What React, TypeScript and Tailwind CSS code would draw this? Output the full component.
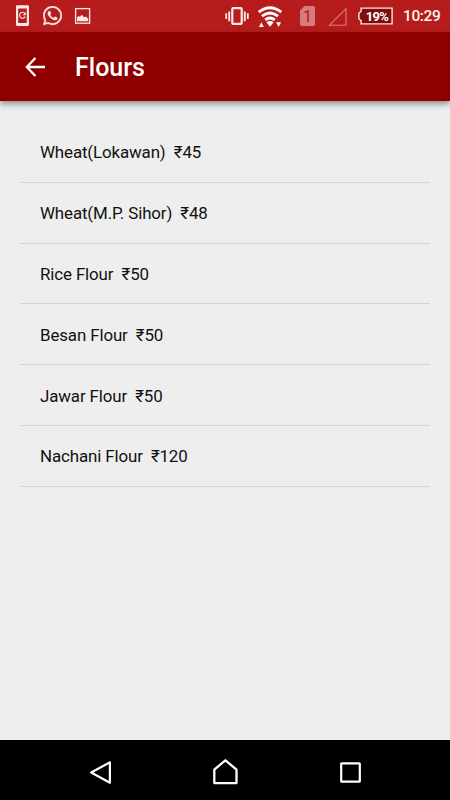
import React from "react";

const flours = [
  { name: "Wheat(Lokawan)", price: 45 },
  { name: "Wheat(M.P. Sihor)", price: 48 },
  { name: "Rice Flour", price: 50 },
  { name: "Besan Flour", price: 50 },
  { name: "Jawar Flour", price: 50 },
  { name: "Nachani Flour", price: 120 },
];

function PhoneSyncIcon() {
  return (
    <svg className="ml-[15px] h-8 w-[15px] shrink-0" viewBox="15 0 15 32" fill="none">
      <path fillRule="evenodd" fill="#f9e8e8" d="M17.3 5.3h10.4a1.3 1.3 0 0 1 1.3 1.3v18a1.3 1.3 0 0 1-1.3 1.3H17.3a1.3 1.3 0 0 1-1.3-1.3v-18a1.3 1.3 0 0 1 1.3-1.3zM18.2 8.4v14.5h8.6V8.4z" />
      <path d="M25 13.4a3 3 0 1 0 .3 3.2" stroke="#f9e8e8" strokeWidth="1.1" />
      <path d="M25.8 12v3.2h-3.2z" fill="#f9e8e8" />
    </svg>
  );
}

function WhatsAppIcon() {
  return (
    <svg className="ml-[13px] h-[20px] w-[19px] shrink-0" viewBox="0 0 24 25" fill="#f9e8e8">
      <path d="M17.472 14.382c-.297-.149-1.758-.867-2.03-.967-.273-.099-.471-.148-.67.15-.197.297-.767.966-.94 1.164-.173.199-.347.223-.644.075-.297-.15-1.255-.463-2.39-1.475-.883-.788-1.48-1.761-1.653-2.059-.173-.297-.018-.458.13-.606.134-.133.298-.347.446-.52.149-.174.198-.298.298-.497.099-.198.05-.371-.025-.52-.075-.149-.669-1.612-.916-2.207-.242-.579-.487-.5-.669-.51-.173-.008-.371-.01-.57-.01-.198 0-.52.074-.792.372-.272.297-1.04 1.016-1.04 2.479 0 1.462 1.065 2.875 1.213 3.074.149.198 2.096 3.2 5.077 4.487.709.306 1.262.489 1.694.625.712.227 1.36.195 1.871.118.571-.085 1.758-.719 2.006-1.413.248-.694.248-1.289.173-1.413-.074-.124-.272-.198-.57-.347m-5.421 7.403h-.004a9.87 9.87 0 0 1-5.031-1.378l-.361-.214-3.741.982.998-3.648-.235-.374a9.86 9.86 0 0 1-1.51-5.26c.001-5.45 4.436-9.884 9.888-9.884 2.64 0 5.122 1.03 6.988 2.898a9.825 9.825 0 0 1 2.893 6.994c-.003 5.45-4.437 9.884-9.885 9.884m8.413-18.297A11.815 11.815 0 0 0 12.05 0C5.495 0 .16 5.335.157 11.892c0 2.096.547 4.142 1.588 5.945L.057 24l6.305-1.654a11.882 11.882 0 0 0 5.683 1.448h.005c6.554 0 11.89-5.335 11.893-11.893a11.821 11.821 0 0 0-3.48-8.413z" stroke="#f9e8e8" strokeWidth=".4" />
    </svg>
  );
}

function PictureIcon() {
  return (
    <svg className="ml-[12px] h-8 w-[18px] shrink-0" viewBox="74 0 18 32" fill="none">
      <rect x="75.6" y="8.6" width="14" height="14.6" stroke="#f9e8e8" strokeWidth="1.3" />
      <path d="M77 21.3v-3.8l1.5-1.5 1.5.7 1.8-1.9 2.2 2.5 1.5-.9 2.7 2v2.9z" fill="#f9e8e8" />
    </svg>
  );
}

function VibrateIcon() {
  return (
    <svg className="ml-auto h-8 w-[26px] shrink-0" viewBox="224 0 26 32" fill="none" stroke="#f9e8e8">
      <rect x="232.3" y="8.1" width="9.4" height="15.8" rx=".8" strokeWidth="2.2" />
      <path d="M229.2 11.5v9.8M244.8 11.5v9.8" strokeWidth="1.9" />
      <path d="M226.2 13.3v5.8M247.8 13.3v5.8" strokeWidth="1.8" />
    </svg>
  );
}

function WifiIcon() {
  return (
    <svg className="ml-[7px] h-8 w-[27px] shrink-0" viewBox="257 0 27 32" fill="none">
      <path d="M258.7 12.2q11.3-8.8 22.6 0M262 16.2q8-6.4 16 0M265.2 19.8q4.8-3.7 9.6 0" stroke="#fff" strokeWidth="2.8" />
      <path d="M266.4 22.2q3.6-2.2 7.2 0L270 26.8zM259 27l2.4-4.8 2.4 4.8zM276.1 22.3h5l-2.5 4.7z" fill="#fff" />
    </svg>
  );
}

function SimIcon() {
  return (
    <div className="ml-[16px] flex h-5 w-[15px] shrink-0 items-center justify-center rounded-[2px] bg-[#d77c7c] pt-px font-['Roboto',sans-serif] text-[17px] font-normal leading-none text-[#b71c1c] [clip-path:polygon(30%_0,100%_0,100%_100%,0_100%,0_22%)]">
      1
    </div>
  );
}

function SignalIcon() {
  return (
    <svg className="ml-[13px] h-8 w-[20px] shrink-0" viewBox="328 0 20 32" fill="none">
      <path d="M329.5 25.2H346V8.9z" stroke="#d77c7c" strokeWidth="1.1" />
    </svg>
  );
}

function Battery() {
  return (
    <div className="ml-[9px] grid h-8 w-[37px] shrink-0 place-items-center">
      <svg className="col-start-1 row-start-1 h-8 w-[37px]" viewBox="357 0 37 32">
        <path d="M361.1 8.1h31v15.8h-31v-3.1l-2.2-2v-5.6l2.2-2z" fill="#820b0b" stroke="#f9e8e8" strokeWidth="1.4" />
      </svg>
      <span className="col-start-1 row-start-1 pl-[3px] pt-px text-[13px] font-bold leading-none tracking-[-0.6px] text-white">19%</span>
    </div>
  );
}

function StatusBar() {
  return (
    <div className="flex h-8 shrink-0 items-center bg-[#b71c1c]">
      <PhoneSyncIcon />
      <WhatsAppIcon />
      <PictureIcon />
      <VibrateIcon />
      <WifiIcon />
      <SimIcon />
      <SignalIcon />
      <Battery />
      <span className="ml-[9px] w-[47px] pt-px text-[15.5px] font-medium leading-none tracking-[-0.4px] text-[#fdf3f3]">10:29</span>
    </div>
  );
}

function Toolbar() {
  return (
    <header className="z-10 flex h-[69px] shrink-0 items-center bg-[#8e0000] shadow-[0_3px_6px_rgba(0,0,0,0.4)]">
      <svg className="ml-[25px] h-[20px] w-[20px]" viewBox="0 0 20 20" fill="none" stroke="#fff" strokeWidth="2.3">
        <path d="M20 10H2M10.4 1 1.8 10l8.6 9" />
      </svg>
      <h1 className="ml-[30px] pt-[2px] text-[25px] font-medium leading-none text-white">Flours</h1>
    </header>
  );
}

function NavigationBar() {
  return (
    <nav className="flex h-[60px] shrink-0 items-center bg-black pl-[88px] pt-1">
      <svg className="h-[28px] w-[25px]" viewBox="88 758 25 28" fill="none" stroke="#fff" strokeWidth="2.2">
        <path d="M109.9 762.3v20.4L91.2 772.5z" strokeLinejoin="round" />
      </svg>
      <svg className="ml-[98px] h-[30px] w-[28px]" viewBox="211 757 28 30" fill="none" stroke="#fff" strokeWidth="2.3">
        <path d="M214.3 769.7 225.4 760.3l11.1 9.4v13.4h-22.2z" strokeLinejoin="round" />
      </svg>
      <svg className="ml-[98px] h-[26px] w-[26px]" viewBox="337 759 26 26" fill="none" stroke="#fff" strokeWidth="2.2">
        <rect x="341.2" y="763.3" width="18.6" height="18.4" rx=".5" />
      </svg>
    </nav>
  );
}

export default function App() {
  return (
    <div className="flex h-[800px] w-[450px] flex-col overflow-hidden bg-[#eeeeee] font-['Roboto','Noto_Sans',sans-serif]">
      <StatusBar />
      <Toolbar />
      <main className="flex-1 px-5 pt-[21px]">
        <ul>
          {flours.map((flour) => (
            <li
              key={flour.name}
              className="flex h-[60.8px] items-center whitespace-pre border-b border-[#d3d3d3] pl-5 pt-[2px] text-[16.9px] leading-none tracking-[-0.12px] text-[#111111]"
            >
              {flour.name + "  ₹" + flour.price}
            </li>
          ))}
        </ul>
      </main>
      <NavigationBar />
    </div>
  );
}
